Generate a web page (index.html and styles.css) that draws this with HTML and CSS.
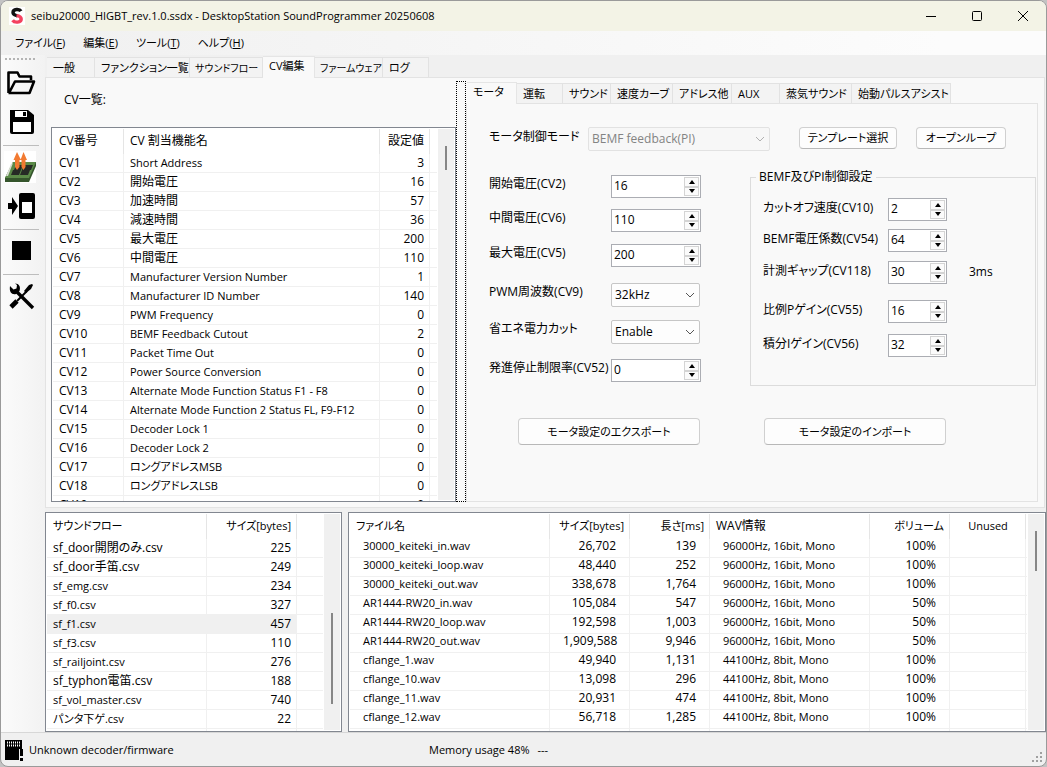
FILE: index.html
```html
<!DOCTYPE html>
<html lang="ja">
<head>
<meta charset="utf-8">
<title>DesktopStation SoundProgrammer</title>
<link rel="stylesheet" href="styles.css">
</head>
<body>
<div class="window">
  <header class="titlebar">
    <svg class="logo" width="16" height="18" viewBox="0 0 16 18" aria-hidden="true">
      <rect width="16" height="18" fill="#fff"/>
      <path d="M12 4.2 C10.5 1.6 4 1.8 4 5.4 C4 8 7 8.2 8.6 9" fill="none" stroke="#111" stroke-width="3.4"/>
      <path d="M7.5 8.6 C11 9 12.2 10 12.2 12 C12.2 15.8 5.5 16 3.6 13.2" fill="none" stroke="#f4425f" stroke-width="3.4"/>
    </svg>
    <h1 class="title">seibu20000_HIGBT_rev.1.0.ssdx - DesktopStation SoundProgrammer 20250608</h1>
    <div class="winbtns">
      <button aria-label="最小化"><svg width="12" height="12" viewBox="0 0 12 12"><path d="M1 6.5H11" stroke="#000" fill="none"/></svg></button>
      <button aria-label="最大化"><svg width="12" height="12" viewBox="0 0 12 12"><rect x="1.5" y="1.5" width="9" height="9" rx="1" stroke="#000" fill="none"/></svg></button>
      <button aria-label="閉じる"><svg width="12" height="12" viewBox="0 0 12 12"><path d="M1 1L11 11M11 1L1 11" stroke="#000" fill="none"/></svg></button>
    </div>
  </header>
  <nav class="menubar">
    <button>ファイル(<u>F</u>)</button>
    <button>編集(<u>E</u>)</button>
    <button>ツール(<u>T</u>)</button>
    <button>ヘルプ(<u>H</u>)</button>
  </nav>
  <div class="body">
    <aside class="toolbar">
      <div class="grip"></div>
      <button aria-label="開く"><svg width="32" height="32" viewBox="0 0 32 32"><path d="M4.500 26V5.500H13.500L15.500 9.500H27V13M4.500 26H25.500L30 14.500H11L5 26" fill="none" stroke="#000" stroke-width="2.600" stroke-linejoin="round"/></svg></button>
      <button aria-label="保存"><svg width="32" height="32" viewBox="0 0 32 32"><path d="M6 4H24L30 9V26Q30 28 28 28H8Q6 28 6 26Z" fill="#000"/><path d="M11 5H23V11H11ZM9 16H27V26H9Z" fill="#fff"/><path d="M19 6H22V10H19Z" fill="#000"/></svg></button>
      <hr>
      <button aria-label="書き込み"><svg width="32" height="32" viewBox="0 0 32 32"><rect width="32" height="32" fill="#fff"/><path d="M9 11H32V15L25 31H1V27Z" fill="#35552c"/><path d="M9 11H32L25 27H1Z" fill="#5b8a48"/><path d="M7 13L9 12L4 25H2Z" fill="#d8ddd2"/><path d="M12 14H19L17 19H10ZM20 14H29L27 19H18ZM9 19H17L15 24H7ZM18 19H26L24 24H16Z" fill="#262a25"/><path d="M13 1L17 9H15.500V16L13 19L11 16V9H9.500ZM19.500 1L23 9H21.500V16L19.500 19L17.500 16V9H16.500Z" fill="#f27a31"/></svg></button>
      <button aria-label="読み込み"><svg width="32" height="32" viewBox="0 0 32 32"><rect x="15" y="3" width="16" height="26" rx="2" fill="#000"/><path d="M18 12H28V23H18Z" fill="#fff"/><path d="M4 13H8V7L14 16L8 25V19H4Z" fill="#000"/></svg></button>
      <hr>
      <button aria-label="停止"><svg width="32" height="32" viewBox="0 0 32 32"><rect x="8" y="6" width="19" height="19" fill="#000"/></svg></button>
      <hr>
      <button aria-label="設定"><svg width="32" height="32" viewBox="0 0 32 32"><path d="M11 10L29 28" stroke="#000" stroke-width="3.400" fill="none"/><path d="M6 6L9.500 9.500L12.500 8.500L13 5L11 3.500C15 3.500 17 7 15.500 11L12 14C8 15 5 12.500 6 6Z" fill="#000"/><path d="M7 27L13 21" stroke="#000" stroke-width="4.600"/><path d="M13 21L23 11" stroke="#000" stroke-width="2"/><path d="M20 11L25 5L28 4L29 5L27 9L22 13Z" fill="#000"/></svg></button>
    </aside>
    <main class="content">
      <section class="tabs main-tabs">
        <div class="tabrow" role="tablist">
          <button role="tab" class="t48">一般</button><button role="tab" class="t95">ファンクション一覧</button><button role="tab" class="t73 kana">サウンドフロー</button><button role="tab" class="t52" aria-selected="true">CV編集</button><button role="tab" class="t68 kana">ファームウェア</button><button role="tab" class="t46">ログ</button>
        </div>
        <div class="page split">
          <div class="cvpane">
            <h2 class="cvtitle">CV一覧:</h2>
            <div class="list cv">
              <div class="view">
              <table>
                <colgroup><col class="c71"><col><col class="c50"><col class="c7"></colgroup>
                <thead><tr><th>CV番号</th><th>CV 割当機能名</th><th class="r">設定値</th><th></th></tr></thead>
                <tbody>
                <tr><td>CV1</td><td class="en">Short Address</td><td class="r">3</td><td></td></tr>
                <tr><td>CV2</td><td>開始電圧</td><td class="r">16</td><td></td></tr>
                <tr><td>CV3</td><td>加速時間</td><td class="r">57</td><td></td></tr>
                <tr><td>CV4</td><td>減速時間</td><td class="r">36</td><td></td></tr>
                <tr><td>CV5</td><td>最大電圧</td><td class="r">200</td><td></td></tr>
                <tr><td>CV6</td><td>中間電圧</td><td class="r">110</td><td></td></tr>
                <tr><td>CV7</td><td class="en">Manufacturer Version Number</td><td class="r">1</td><td></td></tr>
                <tr><td>CV8</td><td class="en">Manufacturer ID Number</td><td class="r">140</td><td></td></tr>
                <tr><td>CV9</td><td class="en">PWM Frequency</td><td class="r">0</td><td></td></tr>
                <tr><td>CV10</td><td class="en">BEMF Feedback Cutout</td><td class="r">2</td><td></td></tr>
                <tr><td>CV11</td><td class="en">Packet Time Out</td><td class="r">0</td><td></td></tr>
                <tr><td>CV12</td><td class="en">Power Source Conversion</td><td class="r">0</td><td></td></tr>
                <tr><td>CV13</td><td class="en">Alternate Mode Function Status F1 - F8</td><td class="r">0</td><td></td></tr>
                <tr><td>CV14</td><td class="en">Alternate Mode Function 2 Status FL, F9-F12</td><td class="r">0</td><td></td></tr>
                <tr><td>CV15</td><td class="en">Decoder Lock 1</td><td class="r">0</td><td></td></tr>
                <tr><td>CV16</td><td class="en">Decoder Lock 2</td><td class="r">0</td><td></td></tr>
                <tr><td>CV17</td><td class="en">ロングアドレスMSB</td><td class="r">0</td><td></td></tr>
                <tr><td>CV18</td><td class="en">ロングアドレスLSB</td><td class="r">0</td><td></td></tr>
                <tr><td>CV19</td><td class="en">Consist Address</td><td class="r">0</td><td></td></tr>
                </tbody>
              </table>
              </div>
              <div class="scroll"><div class="thumb thumb-cv"></div></div>
            </div>
          </div>
          <div class="splitter"></div>
          <section class="tabs sub-tabs">
            <div class="tabrow" role="tablist">
              <button role="tab" class="t50" aria-selected="true">モータ</button><button role="tab" class="t46">運転</button><button role="tab" class="t48">サウンド</button><button role="tab" class="t62">速度カーブ</button><button role="tab" class="t59">アドレス他</button><button role="tab" class="t48">AUX</button><button role="tab" class="t72">蒸気サウンド</button><button role="tab" class="t99">始動パルスアシスト</button>
            </div>
            <div class="page motor">
              <div class="moderow">
                <label for="mode">モータ制御モード</label>
                <div class="combo wide off"><select id="mode" disabled><option>BEMF feedback(PI)</option></select><svg width="10" height="6" viewBox="0 0 10 6"><path d="M1 1L5 5L9 1" fill="none" stroke="currentColor"/></svg></div>
                <button class="btn tpl">テンプレート選択</button>
                <button class="btn open">オープンループ</button>
              </div>
              <div class="forms">
                <div class="basic">
                  <label for="cv2">開始電圧(CV2)</label><div class="spin"><input id="cv2" type="text" value="16"><span class="arrows"><button aria-label="増"></button><button aria-label="減"></button></span></div>
                  <label for="cv6">中間電圧(CV6)</label><div class="spin"><input id="cv6" type="text" value="110"><span class="arrows"><button aria-label="増"></button><button aria-label="減"></button></span></div>
                  <label for="cv5">最大電圧(CV5)</label><div class="spin"><input id="cv5" type="text" value="200"><span class="arrows"><button aria-label="増"></button><button aria-label="減"></button></span></div>
                  <label for="cv9">PWM周波数(CV9)</label><div class="combo"><select id="cv9"><option>32kHz</option></select><svg width="10" height="6" viewBox="0 0 10 6"><path d="M1 1L5 5L9 1" fill="none" stroke="currentColor"/></svg></div>
                  <label for="eco">省エネ電力カット</label><div class="combo"><select id="eco"><option>Enable</option></select><svg width="10" height="6" viewBox="0 0 10 6"><path d="M1 1L5 5L9 1" fill="none" stroke="currentColor"/></svg></div>
                  <label for="cv52">発進停止制限率(CV52)</label><div class="spin"><input id="cv52" type="text" value="0"><span class="arrows"><button aria-label="増"></button><button aria-label="減"></button></span></div>
                </div>
                <fieldset class="bemf">
                  <legend>BEMF及びPI制御設定</legend>
                  <div class="pi">
                    <label for="cv10">カットオフ速度(CV10)</label><div class="spin"><input id="cv10" type="text" value="2"><span class="arrows"><button aria-label="増"></button><button aria-label="減"></button></span></div><span></span>
                    <label for="cv54">BEMF電圧係数(CV54)</label><div class="spin"><input id="cv54" type="text" value="64"><span class="arrows"><button aria-label="増"></button><button aria-label="減"></button></span></div><span></span>
                    <label for="cv118">計測ギャップ(CV118)</label><div class="spin"><input id="cv118" type="text" value="30"><span class="arrows"><button aria-label="増"></button><button aria-label="減"></button></span></div><span class="unit">3ms</span>
                    <label for="cv55">比例Pゲイン(CV55)</label><div class="spin"><input id="cv55" type="text" value="16"><span class="arrows"><button aria-label="増"></button><button aria-label="減"></button></span></div><span></span>
                    <label for="cv56">積分Iゲイン(CV56)</label><div class="spin"><input id="cv56" type="text" value="32"><span class="arrows"><button aria-label="増"></button><button aria-label="減"></button></span></div><span></span>
                  </div>
                </fieldset>
              </div>
              <div class="iorow">
                <button class="btn">モータ設定のエクスポート</button>
                <button class="btn">モータ設定のインポート</button>
              </div>
            </div>
          </section>
        </div>
      </section>
      <section class="lists">
        <div class="list flow">
          <div class="view">
          <table>
            <colgroup><col><col class="c90"><col class="c26"></colgroup>
            <thead><tr><th class="en">サウンドフロー</th><th class="r en">サイズ[bytes]</th><th></th></tr></thead>
            <tbody>
            <tr><td>sf_door開閉のみ.csv</td><td class="r">225</td><td></td></tr>
            <tr><td>sf_door手笛.csv</td><td class="r">249</td><td></td></tr>
            <tr><td class="en">sf_emg.csv</td><td class="r">234</td><td></td></tr>
            <tr><td class="en">sf_f0.csv</td><td class="r">327</td><td></td></tr>
            <tr class="sel"><td class="en">sf_f1.csv</td><td class="r">457</td><td></td></tr>
            <tr><td class="en">sf_f3.csv</td><td class="r">110</td><td></td></tr>
            <tr><td class="en">sf_railjoint.csv</td><td class="r">276</td><td></td></tr>
            <tr><td>sf_typhon電笛.csv</td><td class="r">188</td><td></td></tr>
            <tr><td class="en">sf_vol_master.csv</td><td class="r">740</td><td></td></tr>
            <tr><td class="en">パンタ下ゲ.csv</td><td class="r">22</td><td></td></tr>
            <tr><td></td><td></td><td></td></tr>
            </tbody>
          </table>
          </div>
          <div class="scroll"><div class="thumb thumb-flow"></div></div>
        </div>
        <div class="list files">
          <div class="view">
          <table>
            <colgroup><col><col class="c80"><col class="c80"><col class="c160"><col class="c80"><col class="c76"><col class="c1"></colgroup>
            <thead><tr><th class="en">ファイル名</th><th class="r en">サイズ[bytes]</th><th class="r en">長さ[ms]</th><th>WAV情報</th><th class="r en">ボリューム</th><th class="m en">Unused</th><th></th></tr></thead>
            <tbody>
            <tr><td class="en">30000_keiteki_in.wav</td><td class="r">26,702</td><td class="r">139</td><td class="en">96000Hz, 16bit, Mono</td><td class="r">100%</td><td></td><td></td></tr>
            <tr><td class="en">30000_keiteki_loop.wav</td><td class="r">48,440</td><td class="r">252</td><td class="en">96000Hz, 16bit, Mono</td><td class="r">100%</td><td></td><td></td></tr>
            <tr><td class="en">30000_keiteki_out.wav</td><td class="r">338,678</td><td class="r">1,764</td><td class="en">96000Hz, 16bit, Mono</td><td class="r">100%</td><td></td><td></td></tr>
            <tr><td class="en">AR1444-RW20_in.wav</td><td class="r">105,084</td><td class="r">547</td><td class="en">96000Hz, 16bit, Mono</td><td class="r">50%</td><td></td><td></td></tr>
            <tr><td class="en">AR1444-RW20_loop.wav</td><td class="r">192,598</td><td class="r">1,003</td><td class="en">96000Hz, 16bit, Mono</td><td class="r">50%</td><td></td><td></td></tr>
            <tr><td class="en">AR1444-RW20_out.wav</td><td class="r">1,909,588</td><td class="r">9,946</td><td class="en">96000Hz, 16bit, Mono</td><td class="r">50%</td><td></td><td></td></tr>
            <tr><td class="en">cflange_1.wav</td><td class="r">49,940</td><td class="r">1,131</td><td class="en">44100Hz, 8bit, Mono</td><td class="r">100%</td><td></td><td></td></tr>
            <tr><td class="en">cflange_10.wav</td><td class="r">13,098</td><td class="r">296</td><td class="en">44100Hz, 8bit, Mono</td><td class="r">100%</td><td></td><td></td></tr>
            <tr><td class="en">cflange_11.wav</td><td class="r">20,931</td><td class="r">474</td><td class="en">44100Hz, 8bit, Mono</td><td class="r">100%</td><td></td><td></td></tr>
            <tr><td class="en">cflange_12.wav</td><td class="r">56,718</td><td class="r">1,285</td><td class="en">44100Hz, 8bit, Mono</td><td class="r">100%</td><td></td><td></td></tr>
            <tr><td></td><td></td><td></td><td></td><td></td><td></td><td></td></tr>
            </tbody>
          </table>
          </div>
          <div class="scroll"><div class="thumb thumb-files"></div></div>
        </div>
      </section>
    </main>
  </div>
  <footer class="status">
    <svg width="20" height="22" viewBox="0 0 20 22" aria-hidden="true"><path d="M1 1H18V10H15V21H1Z" fill="#000"/><path d="M3 3.500H17M3 6.500H17" stroke="#fff" stroke-width="2" stroke-dasharray="1 1"/><path d="M16 10H19V17H16ZM16 19H19V22H16Z" fill="#000"/></svg>
    <span class="decoder">Unknown decoder/firmware</span>
    <span class="memory">Memory usage 48%</span>
    <span>---</span>
    <svg class="sizer" width="12" height="12" viewBox="0 0 12 12" aria-hidden="true"><path d="M8 0h2v2h-2zM4 4h2v2h-2zM8 4h2v2h-2zM0 8h2v2h-2zM4 8h2v2h-2zM8 8h2v2h-2z" fill="#a0a0a0"/></svg>
  </footer>
</div>
</body>
</html>
```

FILE: styles.css
```css
* { box-sizing: border-box; }
body { margin: 0; background: #c3c3c3; color: #000; font: 12px/16px "Open Sans", "Noto Sans CJK JP", sans-serif; font-feature-settings: "palt"; }
button, input, select { font: inherit; font-feature-settings: inherit; color: inherit; margin: 0; padding: 0; border: 0; background: none; }
h1, h2 { margin: 0; font: inherit; }
svg { display: block; flex: none; }

.window { display: flex; flex-direction: column; height: 100vh; border: 1px solid #9a9a9a; border-radius: 8px; overflow: hidden; background: #f0f0f0; white-space: nowrap; }

.titlebar { flex: none; display: flex; align-items: center; height: 30px; padding-left: 8px; background: #f3f3e6; }
.title { margin-left: 6px; flex: 1; font-size: 11px; }
.winbtns { display: flex; }
.winbtns button { width: 46px; height: 30px; display: flex; align-items: center; justify-content: center; }

.menubar { flex: none; display: flex; gap: 18px; height: 24px; padding-left: 14px; font-size: 11px; background: linear-gradient(90deg, #f0f0f0, #fcfcfc 90%); }

.body { flex: 1; min-height: 0; display: flex; }
.toolbar { flex: none; width: 44px; padding: 3px 6px 0 2px; display: flex; flex-direction: column; background: linear-gradient(90deg, #fbfbfb, #f2f2f2); }
.toolbar button { height: 32px; margin: 0 0 7px 1px; }
.grip { height: 2px; margin: 0 2px 7px; background: repeating-linear-gradient(90deg, #b4b4b4 0 2px, transparent 2px 4px); }
.toolbar hr { width: 100%; margin: 0 0 5px; border: 0; border-top: 1px solid #bdbdbd; }

.content { flex: 1; min-width: 0; display: flex; flex-direction: column; gap: 4px; }

.tabs { min-width: 0; min-height: 0; display: flex; flex-direction: column; }
.main-tabs { flex: 1; margin-right: 1px; }
.tabrow { flex: none; display: flex; align-items: flex-end; height: 22px; padding-left: 2px; }
.tabrow button { height: 20px; padding-left: 6px; text-align: left; border: 1px solid #e2e2e2; border-width: 1px 1px 0 0; background: #f3f3f3; font-size: 11px; }
.tabrow button[aria-selected] { height: 22px; padding-bottom: 3px; background: #f9f9f9; border-color: #e5e5e5; margin-bottom: -1px; z-index: 1; }
.tabrow .kana { font-size: 10px; padding-left: 5px; }
.t46 { width: 46px; } .t48 { width: 48px; } .t50 { width: 50px; } .t52 { width: 52px; }
.t59 { width: 59px; } .t62 { width: 62px; } .t68 { width: 68px; } .t72 { width: 72px; }
.t73 { width: 73px; } .t95 { width: 95px; } .t99 { width: 99px; }
.page { flex: 1; min-height: 0; border: 1px solid #e3e3e3; background: #f9f9f9; }

.split { display: grid; grid-template-columns: 410px 10px 1fr; padding: 3px 6px 5px 0; }
.cvpane { min-height: 0; display: flex; flex-direction: column; padding-left: 5px; }
.cvtitle { padding: 11px 0 19px 13px; }
.splitter { border: 1px dotted #000; }

.list { display: flex; min-height: 0; border: 1px solid #828790; background: #fff; }
.view { flex: 1; min-width: 0; overflow: hidden; padding: 1px 0 0 1px; }
.list table { width: 100%; table-layout: fixed; border-collapse: separate; border-spacing: 0; }
.list th { height: 25px; padding: 0 5px 1px 6px; font-weight: normal; text-align: left; border-right: 1px solid #e5e5e5; }
.list td { height: 19px; padding: 0 5px 0 6px; line-height: 16px; border: 1px solid #f0f0f0; border-width: 0 1px 1px 0; }
.list th:last-child, .list td:last-child { border-right: 0; padding: 0; }
.list .en { font-size: 11px; }
.list .r { text-align: right; }
.list .m { text-align: center; }
.sel td { background: #f0f0f0; }
.sel td:last-child { background: #fff; }
.c1 { width: 1px; } .c7 { width: 7px; } .c26 { width: 26px; } .c50 { width: 50px; } .c71 { width: 71px; }
.c76 { width: 76px; } .c80 { width: 80px; } .c90 { width: 90px; } .c160 { width: 160px; }
.scroll { flex: none; width: 16px; margin: 1px; background: #f0f0f0; }
.thumb { width: 2px; margin-left: 7px; background: #868686; }
.thumb-cv { height: 24px; margin-top: 17px; }
.thumb-flow { height: 91px; margin-top: 99px; }
.thumb-files { height: 40px; margin-top: 17px; }
.cv { flex: 1; }
.lists { flex: none; height: 220px; display: flex; gap: 6px; }
.flow { flex: none; width: 297px; }
.files { flex: 1; min-width: 0; }
.files td { padding: 0 13px 4px 13px; line-height: 14px; }

.motor { padding: 23px 0 0 21px; }
.moderow { display: flex; align-items: flex-start; height: 48px; }
.moderow label { width: 99px; padding-top: 2px; }
.btn { height: 22px; font-size: 11px; border: 1px solid #d0d0d0; border-bottom-color: #b8b8b8; border-radius: 4px; background: #fdfdfd; }
.tpl { width: 98px; margin-left: 29px; }
.open { width: 90px; margin-left: 19px; }
.sub-tabs .motor { padding-left: 22px; }
.sub-tabs .tabrow { padding-left: 1px; }
.forms { display: flex; gap: 49px; }
.basic { flex: none; display: grid; grid-template-columns: 122px 90px; grid-template-rows: 34px 35px 39px 37px 39px 24px; align-items: start; }
.basic label { padding-top: 1px; }
.combo { position: relative; width: 89px; height: 24px; border: 1px solid #c6c6c6; border-radius: 2px; background: #fdfdfd; }
.combo.wide { width: 182px; }
.combo select { appearance: none; width: 100%; height: 100%; padding-left: 3px; opacity: 1; }
.combo svg { position: absolute; right: 4px; top: 8px; color: #555; pointer-events: none; }
.combo.off { color: #838383; background: #f7f7f7; border-color: #e2e2e2; }
.combo.off svg { color: #b0b0b0; }
.spin { display: flex; height: 23px; border: 1px solid #abadb3; background: #fff; }
.spin input { flex: 1; min-width: 0; height: 18px; padding-left: 2px; outline: 0; }
.arrows { flex: none; width: 16px; display: flex; flex-direction: column; padding: 1px 1px 1px 0; }
.arrows button { flex: 1; display: flex; align-items: center; justify-content: center; border: 1px solid #d4d4d4; background: #fbfbfb; }
.arrows button::before { content: ""; border: 3px solid transparent; border-top: 0; border-bottom: 4px solid #000; }
.arrows button:last-child::before { border-top: 4px solid #000; border-bottom: 0; }
.bemf { flex: 1; min-width: 0; height: 217px; margin: -6px 1px 0 0; padding: 0 0 0 12px; border: 1px solid #dcdcdc; }
.bemf legend { padding: 0 3px; margin-left: -7px; }
.pi { display: grid; grid-template-columns: 125px 59px 1fr; grid-template-rows: 31px 32px 39px 34px 24px; align-items: start; padding-top: 13px; }
.pi label { padding-top: 2px; }
.unit { padding: 3px 0 0 22px; }
.iorow { display: flex; gap: 64px; padding: 32px 0 0 29px; }
.iorow .btn { width: 182px; height: 27px; }

.status { flex: none; display: flex; align-items: center; height: 34px; padding-left: 3px; border-top: 1px solid #d7d7d7; position: relative; font-size: 11px; }
.decoder { width: 400px; margin-left: 5px; }
.memory { margin-right: 8px; }
.sizer { position: absolute; right: 2px; bottom: 2px; }
```
